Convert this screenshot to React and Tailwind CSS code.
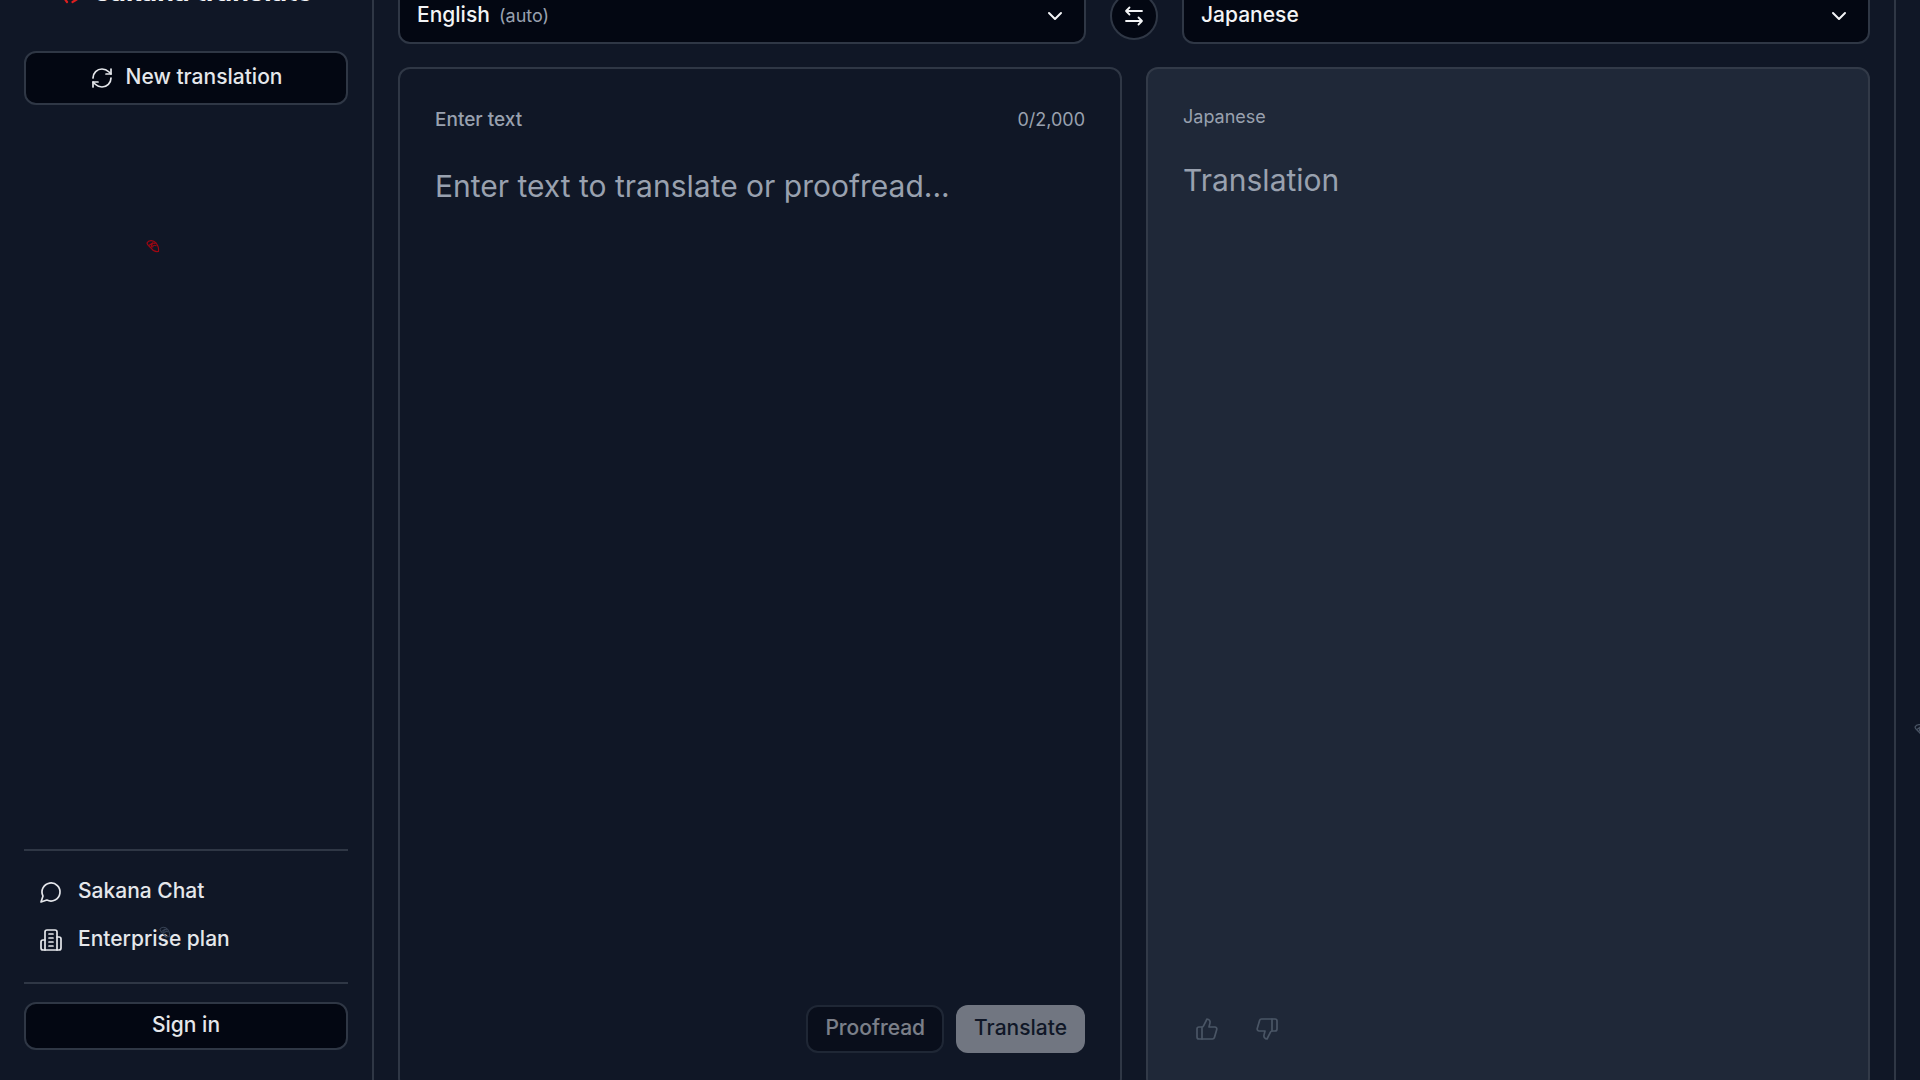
import { ThumbsUp, ThumbsDown, RefreshCw, ChevronDown } from "lucide-react";

const buttonBase =
  "rounded-xl border-2 border-[#2f3745] bg-[#030712] pb-0.5 text-[21px] font-medium text-gray-200";

function ChatIcon() {
  return (
    <svg
      className="size-6 shrink-0 translate-y-px"
      viewBox="0 0 24 24"
      fill="none"
      stroke="currentColor"
      strokeWidth="1.7"
      strokeLinecap="round"
      strokeLinejoin="round"
      aria-hidden="true"
    >
      <path d="M7.9 20A9 9 0 1 0 4 16.1L2 22Z" />
    </svg>
  );
}

function BuildingIcon() {
  return (
    <svg
      className="size-6 shrink-0 translate-y-px"
      viewBox="0 0 24 24"
      fill="none"
      stroke="currentColor"
      strokeWidth="1.7"
      strokeLinecap="round"
      strokeLinejoin="round"
      aria-hidden="true"
    >
      <path d="M6 22V4a2 2 0 0 1 2-2h8a2 2 0 0 1 2 2v18Z" />
      <path d="M6 12H4a2 2 0 0 0-2 2v6a2 2 0 0 0 2 2h2" />
      <path d="M18 9h2a2 2 0 0 1 2 2v9a2 2 0 0 1-2 2h-2" />
      <path d="M10 6h4M10 10h4M10 14h4M10 18h4" />
    </svg>
  );
}

function SwapIcon() {
  return (
    <svg
      className="size-6"
      viewBox="0 0 24 24"
      fill="none"
      stroke="currentColor"
      strokeWidth="1.8"
      strokeLinecap="round"
      strokeLinejoin="round"
      aria-hidden="true"
    >
      <path d="M20 7H4M7.500 3.500 4 7l3.500 3.500" />
      <path d="M4 17h16M16.500 13.500 20 17l-3.500 3.500" />
    </svg>
  );
}

function LogoMark() {
  return (
    <svg
      className="size-8"
      viewBox="0 0 32 32"
      fill="none"
      stroke="#dc1f1f"
      strokeWidth="2.2"
      strokeLinecap="round"
      aria-hidden="true"
    >
      <path d="M3 13C7 6 17 2 27 5 28 13 25 20 13.500 26" />
      <path d="M3 19 8 26M8 15l5 5M14 11l5 5" />
    </svg>
  );
}

function Fish({ className }) {
  return (
    <svg
      className={className}
      viewBox="0 0 14 14"
      fill="none"
      stroke="currentColor"
      strokeWidth="1.2"
      aria-hidden="true"
    >
      <path d="M1 4C2.500 1 7 .5 10 4c2 2.500 3 5.500 2.500 8.500-3 .5-5.500-.5-7-3C3.500 8 1.500 6.500 1 4Z" />
      <path d="M3 6.500 6.500 4M5 8.500l1.500-4.500 3 .5M6.500 8.500c0-2 2.500-3 4-1.500" />
    </svg>
  );
}

function LanguageSelect({ label, value, hint, options }) {
  return (
    <div className="relative min-w-0 flex-1">
      <select
        aria-label={label}
        defaultValue={value}
        className="h-14 w-full appearance-none rounded-xl border-2 border-[#2f3745] bg-[#030712] px-[17px] pb-0.5 text-[21px] font-medium text-gray-100"
      >
        {options.map((name) => (
          <option key={name}>{name}</option>
        ))}
      </select>
      {hint && (
        <span className="pointer-events-none absolute inset-y-0 left-[101px] flex items-center text-[18px] text-gray-400">
          {hint}
        </span>
      )}
      <ChevronDown className="pointer-events-none absolute top-4 right-[19px] size-6 text-gray-100" />
    </div>
  );
}

function Sidebar() {
  return (
    <aside className="flex w-[374px] shrink-0 flex-col border-r-2 border-[#2f3745] px-6 pt-2 pb-16">
      <div className="flex h-10 items-center justify-center gap-1">
        <LogoMark />
        <span className="text-[27px] font-bold text-gray-100">sakana translate</span>
      </div>
      <button className={`${buttonBase} mt-[39px] flex h-[54px] items-center justify-center gap-3`}>
        <RefreshCw className="size-6 translate-y-px" strokeWidth={1.7} aria-hidden="true" />
        New translation
      </button>

      <nav className="mt-auto border-y-2 border-[#2f3745] pt-4 pb-[19px] text-[21px] font-medium text-gray-200">
        <a href="#chat" className="flex h-12 items-center gap-[15px] px-[15px]">
          <ChatIcon />
          Sakana Chat
        </a>
        <a href="#enterprise" className="flex h-12 items-center gap-[15px] px-[15px]">
          <BuildingIcon />
          Enterprise plan
        </a>
      </nav>
      <button className={`${buttonBase} mt-[18px] h-12`}>Sign in</button>
    </aside>
  );
}

function SourceCard() {
  return (
    <section className="flex min-w-0 flex-1 flex-col rounded-xl border-2 border-[#2f3745] p-[35px]">
      <div className="flex items-center justify-between leading-8 text-gray-400">
        <label htmlFor="source" className="text-[19px] font-medium">
          Enter text
        </label>
        <span className="text-[18px]">0/2,000</span>
      </div>
      <textarea
        id="source"
        placeholder="Enter text to translate or proofread..."
        className="mt-[30px] w-full flex-1 resize-none bg-transparent text-[30px] leading-10 text-gray-100 outline-none placeholder:text-gray-400"
      />
      <div className="flex justify-end gap-3">
        <button disabled className={`${buttonBase} h-12 px-[17px] opacity-50`}>
          Proofread
        </button>
        <button
          disabled
          className="h-12 rounded-xl bg-gray-300 px-[18px] pb-0.5 text-[21px] font-medium text-gray-900 opacity-50"
        >
          Translate
        </button>
      </div>
    </section>
  );
}

function ResultCard() {
  return (
    <section className="flex min-w-0 flex-1 flex-col rounded-xl border-2 border-[#323a48] bg-[#1f2838] p-[35px]">
      <h2 className="text-[18px] leading-[26px] text-gray-400">Japanese</h2>
      <p className="mt-[30px] text-[30px] leading-10 text-gray-400">Translation</p>
      <div className="mt-auto flex gap-3 text-gray-600">
        <button disabled aria-label="Good translation" className="flex size-12 items-center justify-center">
          <ThumbsUp className="size-6" strokeWidth={1.7} />
        </button>
        <button disabled aria-label="Bad translation" className="flex size-12 items-center justify-center">
          <ThumbsDown className="size-6" strokeWidth={1.7} />
        </button>
      </div>
    </section>
  );
}

export default function App() {
  return (
    <div className="relative h-screen overflow-hidden bg-[#101726] font-['Inter',sans-serif]">
      <div className="-mt-9 flex h-[calc(100vh+70px)]">
        <Sidebar />
        <main className="mr-6 flex min-w-0 flex-1 flex-col gap-6 border-r-2 border-[#2f3745] p-6">
          <div className="flex h-[55px] items-center gap-6">
            <LanguageSelect
              label="Source language"
              value="English"
              hint="(auto)"
              options={["English", "Japanese"]}
            />
            <button
              aria-label="Swap languages"
              className="flex size-12 shrink-0 items-center justify-center rounded-full border-2 border-[#2f3745] bg-[#030712] text-gray-100"
            >
              <SwapIcon />
            </button>
            <LanguageSelect label="Target language" value="Japanese" options={["English", "Japanese"]} />
          </div>
          <div className="flex flex-1 gap-6">
            <SourceCard />
            <ResultCard />
          </div>
        </main>
      </div>

      <Fish className="pointer-events-none absolute top-[239px] left-[146px] size-3.5 text-red-800" />
      <Fish className="pointer-events-none absolute top-[926px] left-[159px] size-3 text-gray-700" />
      <Fish className="pointer-events-none absolute top-[723px] right-[-8px] size-3.5 text-gray-600" />
    </div>
  );
}
